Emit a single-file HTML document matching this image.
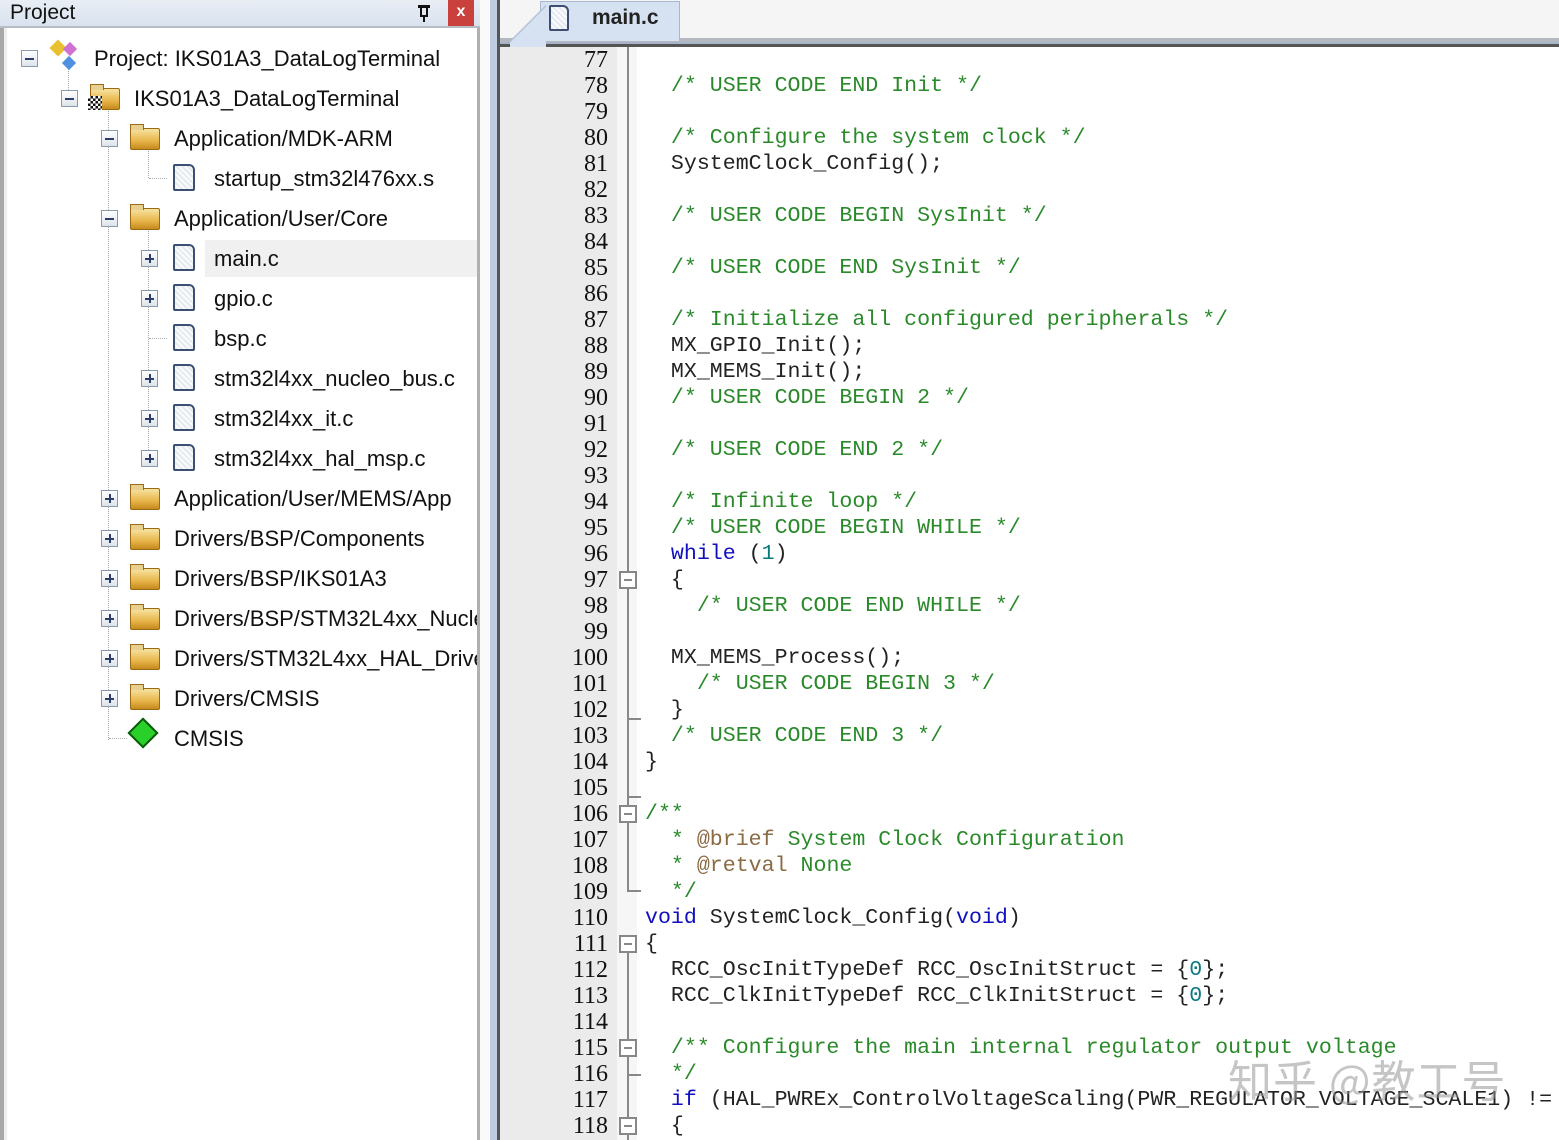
<!DOCTYPE html>
<html><head><meta charset="utf-8">
<style>
*{margin:0;padding:0;box-sizing:border-box}
body{width:1559px;height:1140px;overflow:hidden;background:#fff;position:relative;font-family:"Liberation Sans",sans-serif}
.abs{position:absolute}
#lp{left:0;top:0;width:480px;height:1140px;background:#fff}
#title{left:0;top:0;width:480px;height:28px;background:linear-gradient(#e9eef5,#d9e2ee);border-bottom:2px solid #b8bcc4}
#title span{position:absolute;left:10px;top:1px;font-size:21px;color:#111}
.row{position:absolute;height:40px;font-size:22px;color:#111;white-space:nowrap;line-height:42px}
.exp{position:absolute;width:17px;height:17px;border:1px solid #8a9bb0;background:linear-gradient(#fff,#dde3ea);}
.exp:before{content:"";position:absolute;left:3px;top:7px;width:9px;height:2px;background:#2c3e6a}
.exp.p:after{content:"";position:absolute;left:7px;top:3px;width:2px;height:9px;background:#2c3e6a}
.file{position:absolute;width:22px;height:27px;border:2px solid #3c4e72;border-radius:2px 6px 2px 2px;background:repeating-linear-gradient(45deg,#e6e9f0 0 2px,#fafbfd 2px 4px)}
.fold{position:absolute;width:30px;height:22px;background:linear-gradient(#f7e3a0,#e8b54a 60%,#c58a1e);border:1px solid #9a6b14;border-radius:2px}
.fold:before{content:"";position:absolute;left:-1px;top:-5px;width:12px;height:5px;background:#e7cf90;border:1px solid #9a6b14;border-bottom:none}
#cw{position:absolute;left:0;top:0;width:1559px;height:1140px;overflow:hidden}
.code{position:absolute;left:645px;font-family:"Liberation Mono",monospace;font-size:21.6px;color:#222;white-space:pre;height:26px;line-height:26px}
.ln{position:absolute;left:500px;width:108px;text-align:right;font-family:"Liberation Serif",serif;font-size:24px;color:#111;height:26px;line-height:26px}
.c{color:#2a8a2a}.k{color:#1010c0}.n{color:#0a7a80}.t{color:#8b6a44}
.fb{position:absolute;left:619px;width:18px;height:18px;border:2px solid #888;background:#fff}
.fb:before{content:"";position:absolute;left:3px;top:6px;width:8px;height:2px;background:#888}
.vl{position:absolute;left:627px;width:2px;background:#888}
.tk{position:absolute;left:627px;width:14px;height:2px;background:#888}
</style></head><body>
<div id="lp" class="abs">
<div class="abs" style="left:0;top:28px;width:4px;height:1112px;background:#a8a8a8"></div>
<div class="abs" style="left:4px;top:28px;width:3px;height:1112px;background:#eee"></div>
<div class="abs" style="left:477px;top:28px;width:3px;height:1112px;background:#b0b0b0"></div>
<div id="title" class="abs"><span>Project</span>
<div class="abs" style="left:418px;top:5px;width:12px;height:3px;background:#111"></div>
<div class="abs" style="left:420px;top:5px;width:8px;height:12px;border:2px solid #111;border-top:none"></div>
<div class="abs" style="left:423px;top:16px;width:2px;height:6px;background:#111"></div>
<div class="abs" style="left:448px;top:0;width:26px;height:26px;background:#c9403c;color:#fff;font-weight:bold;font-size:16px;text-align:center;line-height:24px">x</div>
</div>
<div class="abs" style="left:68px;top:66px;height:34px;border-left:1px dotted #aaa"></div>
<div class="abs" style="left:108px;top:106px;height:634px;border-left:1px dotted #aaa"></div>
<div class="abs" style="left:148px;top:146px;height:32px;border-left:1px dotted #aaa"></div>
<div class="abs" style="left:148px;top:226px;height:232px;border-left:1px dotted #aaa"></div>
<div class="abs" style="left:109px;top:738px;width:18px;border-top:1px dotted #aaa"></div>
<div class="abs" style="left:149px;top:178px;width:18px;border-top:1px dotted #aaa"></div>
<div class="abs" style="left:149px;top:338px;width:18px;border-top:1px dotted #aaa"></div>
<div class="abs" style="left:205px;top:240px;width:272px;height:37px;background:#f0f0f0"></div>

<div class="exp" style="left:21px;top:50px"></div>
<div class="abs" style="left:52px;top:42px;width:12px;height:12px;background:#e8c030;transform:rotate(45deg)"></div>
<div class="abs" style="left:65px;top:44px;width:10px;height:10px;background:#d070d0;transform:rotate(45deg)"></div>
<div class="abs" style="left:64px;top:58px;width:10px;height:10px;background:#5090e0;transform:rotate(45deg)"></div>
<div class="row" style="left:94px;top:38px">Project: IKS01A3_DataLogTerminal</div>
<div class="exp" style="left:61px;top:90px"></div>
<div class="fold" style="left:90px;top:88px"></div>
<div class="abs" style="left:88px;top:96px;width:14px;height:14px;background:repeating-conic-gradient(#111 0 25%,#fff 0 50%) 0 0/5px 5px"></div>
<div class="row" style="left:134px;top:78px">IKS01A3_DataLogTerminal</div>
<div class="exp" style="left:101px;top:130px"></div>
<div class="fold" style="left:130px;top:128px"></div>
<div class="row" style="left:174px;top:118px">Application/MDK-ARM</div>
<div class="file" style="left:173px;top:164px"></div>
<div class="row" style="left:214px;top:158px">startup_stm32l476xx.s</div>
<div class="exp" style="left:101px;top:210px"></div>
<div class="fold" style="left:130px;top:208px"></div>
<div class="row" style="left:174px;top:198px">Application/User/Core</div>
<div class="exp p" style="left:141px;top:250px"></div><div class="file" style="left:173px;top:244px"></div><div class="row" style="left:214px;top:238px">main.c</div>
<div class="exp p" style="left:141px;top:290px"></div><div class="file" style="left:173px;top:284px"></div><div class="row" style="left:214px;top:278px">gpio.c</div>
<div class="file" style="left:173px;top:324px"></div><div class="row" style="left:214px;top:318px">bsp.c</div>
<div class="exp p" style="left:141px;top:370px"></div><div class="file" style="left:173px;top:364px"></div><div class="row" style="left:214px;top:358px">stm32l4xx_nucleo_bus.c</div>
<div class="exp p" style="left:141px;top:410px"></div><div class="file" style="left:173px;top:404px"></div><div class="row" style="left:214px;top:398px">stm32l4xx_it.c</div>
<div class="exp p" style="left:141px;top:450px"></div><div class="file" style="left:173px;top:444px"></div><div class="row" style="left:214px;top:438px">stm32l4xx_hal_msp.c</div>
<div class="exp p" style="left:101px;top:490px"></div><div class="fold" style="left:130px;top:488px"></div><div class="row" style="left:174px;top:478px;width:304px;overflow:hidden">Application/User/MEMS/App</div>
<div class="exp p" style="left:101px;top:530px"></div><div class="fold" style="left:130px;top:528px"></div><div class="row" style="left:174px;top:518px;width:304px;overflow:hidden">Drivers/BSP/Components</div>
<div class="exp p" style="left:101px;top:570px"></div><div class="fold" style="left:130px;top:568px"></div><div class="row" style="left:174px;top:558px;width:304px;overflow:hidden">Drivers/BSP/IKS01A3</div>
<div class="exp p" style="left:101px;top:610px"></div><div class="fold" style="left:130px;top:608px"></div><div class="row" style="left:174px;top:598px;width:303px;overflow:hidden">Drivers/BSP/STM32L4xx_Nucleo</div>
<div class="exp p" style="left:101px;top:650px"></div><div class="fold" style="left:130px;top:648px"></div><div class="row" style="left:174px;top:638px;width:303px;overflow:hidden">Drivers/STM32L4xx_HAL_Driver</div>
<div class="exp p" style="left:101px;top:690px"></div><div class="fold" style="left:130px;top:688px"></div><div class="row" style="left:174px;top:678px">Drivers/CMSIS</div>
<div class="abs" style="left:132px;top:722px;width:22px;height:22px;background:#2ad02a;border:2px solid #0a5a0a;transform:rotate(45deg)"></div>
<div class="row" style="left:174px;top:718px">CMSIS</div>
</div>

<div class="abs" style="left:480px;top:0;width:10px;height:1140px;background:#fafafa"></div>
<div class="abs" style="left:490px;top:0;width:7px;height:1140px;background:#bfcbe0"></div>
<div class="abs" style="left:497px;top:0;width:3px;height:1140px;background:#555"></div>
<div class="abs" style="left:500px;top:0;width:1059px;height:38px;background:#f5f5f5"></div>
<div class="abs" style="left:500px;top:38px;width:1059px;height:4px;background:#b4b8c0"></div>
<div class="abs" style="left:500px;top:42px;width:1059px;height:2px;background:#a8b4c8"></div>
<div class="abs" style="left:500px;top:44px;width:1059px;height:3px;background:#555"></div>
<div class="abs" style="left:540px;top:1px;width:140px;height:40px;background:#d6e2f2;border:1px solid #a8b8d0;border-bottom:none"></div>
<div class="abs" style="left:510px;top:1px;width:36px;height:46px;background:linear-gradient(135deg,transparent 48%,#a8b8d0 49%,#d6e2f2 52%);"></div>
<div class="file" style="left:549px;top:5px;height:26px;width:20px"></div>
<div class="abs" style="left:592px;top:6px;font-size:21px;font-weight:bold;color:#222">main.c</div>
<div class="abs" style="left:500px;top:47px;width:117px;height:1093px;background:#ebebeb"></div>
<div class="abs" style="left:617px;top:47px;width:20px;height:1093px;background:#f6f6f6"></div>

<div class="vl" style="top:47px;height:758px"></div>
<div class="tk" style="top:718px"></div>
<div class="tk" style="top:796px"></div>
<div class="vl" style="top:822px;height:70px"></div>
<div class="tk" style="top:890px"></div>
<div class="vl" style="top:944px;height:196px"></div>
<div class="tk" style="top:1074px"></div>
<div class="fb" style="top:571px"></div>
<div class="fb" style="top:805px"></div>
<div class="fb" style="top:935px"></div>
<div class="fb" style="top:1039px"></div>
<div class="fb" style="top:1117px"></div>

<div id="cw">
<div class="ln" style="top:47px">77</div><div class="ln" style="top:73px">78</div><div class="ln" style="top:99px">79</div><div class="ln" style="top:125px">80</div><div class="ln" style="top:151px">81</div><div class="ln" style="top:177px">82</div><div class="ln" style="top:203px">83</div><div class="ln" style="top:229px">84</div><div class="ln" style="top:255px">85</div><div class="ln" style="top:281px">86</div><div class="ln" style="top:307px">87</div><div class="ln" style="top:333px">88</div><div class="ln" style="top:359px">89</div><div class="ln" style="top:385px">90</div><div class="ln" style="top:411px">91</div><div class="ln" style="top:437px">92</div><div class="ln" style="top:463px">93</div><div class="ln" style="top:489px">94</div><div class="ln" style="top:515px">95</div><div class="ln" style="top:541px">96</div><div class="ln" style="top:567px">97</div><div class="ln" style="top:593px">98</div><div class="ln" style="top:619px">99</div><div class="ln" style="top:645px">100</div><div class="ln" style="top:671px">101</div><div class="ln" style="top:697px">102</div><div class="ln" style="top:723px">103</div><div class="ln" style="top:749px">104</div><div class="ln" style="top:775px">105</div><div class="ln" style="top:801px">106</div><div class="ln" style="top:827px">107</div><div class="ln" style="top:853px">108</div><div class="ln" style="top:879px">109</div><div class="ln" style="top:905px">110</div><div class="ln" style="top:931px">111</div><div class="ln" style="top:957px">112</div><div class="ln" style="top:983px">113</div><div class="ln" style="top:1009px">114</div><div class="ln" style="top:1035px">115</div><div class="ln" style="top:1061px">116</div><div class="ln" style="top:1087px">117</div><div class="ln" style="top:1113px">118</div>

<div class="code" style="top:73px">  <span class="c">/* USER CODE END Init */</span></div>
<div class="code" style="top:125px">  <span class="c">/* Configure the system clock */</span></div>
<div class="code" style="top:151px">  SystemClock_Config();</div>
<div class="code" style="top:203px">  <span class="c">/* USER CODE BEGIN SysInit */</span></div>
<div class="code" style="top:255px">  <span class="c">/* USER CODE END SysInit */</span></div>
<div class="code" style="top:307px">  <span class="c">/* Initialize all configured peripherals */</span></div>
<div class="code" style="top:333px">  MX_GPIO_Init();</div>
<div class="code" style="top:359px">  MX_MEMS_Init();</div>
<div class="code" style="top:385px">  <span class="c">/* USER CODE BEGIN 2 */</span></div>
<div class="code" style="top:437px">  <span class="c">/* USER CODE END 2 */</span></div>
<div class="code" style="top:489px">  <span class="c">/* Infinite loop */</span></div>
<div class="code" style="top:515px">  <span class="c">/* USER CODE BEGIN WHILE */</span></div>
<div class="code" style="top:541px">  <span class="k">while</span> (<span class="n">1</span>)</div>
<div class="code" style="top:567px">  {</div>
<div class="code" style="top:593px">    <span class="c">/* USER CODE END WHILE */</span></div>
<div class="code" style="top:645px">  MX_MEMS_Process();</div>
<div class="code" style="top:671px">    <span class="c">/* USER CODE BEGIN 3 */</span></div>
<div class="code" style="top:697px">  }</div>
<div class="code" style="top:723px">  <span class="c">/* USER CODE END 3 */</span></div>
<div class="code" style="top:749px">}</div>
<div class="code" style="top:801px"><span class="c">/**</span></div>
<div class="code" style="top:827px"><span class="c">  * <span class="t">@brief</span> System Clock Configuration</span></div>
<div class="code" style="top:853px"><span class="c">  * <span class="t">@retval</span> None</span></div>
<div class="code" style="top:879px"><span class="c">  */</span></div>
<div class="code" style="top:905px"><span class="k">void</span> SystemClock_Config(<span class="k">void</span>)</div>
<div class="code" style="top:931px">{</div>
<div class="code" style="top:957px">  RCC_OscInitTypeDef RCC_OscInitStruct = {<span class="n">0</span>};</div>
<div class="code" style="top:983px">  RCC_ClkInitTypeDef RCC_ClkInitStruct = {<span class="n">0</span>};</div>
<div class="code" style="top:1035px">  <span class="c">/** Configure the main internal regulator output voltage</span></div>
<div class="code" style="top:1061px">  <span class="c">*/</span></div>
<div class="code" style="top:1087px;width:914px;overflow:hidden">  <span class="k">if</span> (HAL_PWREx_ControlVoltageScaling(PWR_REGULATOR_VOLTAGE_SCALE1) != HAL_OK)</div>
<div class="code" style="top:1113px">  {</div>

<div class="abs" style="left:1228px;top:1046px;font-family:'Noto Sans CJK SC',sans-serif;font-size:44px;color:rgba(150,150,150,0.55);white-space:nowrap;letter-spacing:1px">知乎 @教工号</div>
</div>
</body></html>
